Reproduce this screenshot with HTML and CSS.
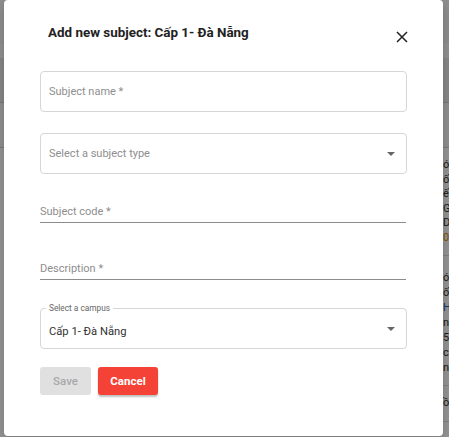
FILE: index.html
```html
<!DOCTYPE html>
<html lang="en">
<head>
  <meta charset="UTF-8">
  <title>Add new subject</title>
  <link rel="stylesheet" href="styles.css">
</head>
<body>

<!-- page behind the modal -->
<div class="page">
  <div class="page-head"></div>
  <div class="page-tabs"></div>
  <div class="page-row"></div>
  <div class="page-row"></div>
  <div class="page-table">
    <div class="cell-block">
      <p>ó</p><p>ố</p><p>ế</p><p>G</p><p>Dế</p><p class="orange">0</p>
    </div>
    <div class="cell-block second">
      <p>ó</p><p>ố</p><p class="blue">H</p><p>n.</p><p>5/</p><p>c</p><p>nc</p>
    </div>
    <div class="cell-block">
      <p>ồ</p>
    </div>
  </div>
</div>

<div class="backdrop"></div>

<div class="dialog">
  <div class="dialog-head">
    <h2 class="dialog-title">Add new subject: Cấp 1- Đà Nẵng</h2>
    <button class="close-btn" aria-label="close">
      <svg width="12" height="12" viewBox="0 0 12 12">
        <path d="M1 1 L11 11 M11 1 L1 11" stroke="#222" stroke-width="1.5" fill="none"/>
      </svg>
    </button>
  </div>

  <form class="dialog-form">
    <div class="field outlined">
      <span class="placeholder">Subject name *</span>
    </div>

    <div class="field outlined select">
      <span class="placeholder">Select a subject type</span>
      <span class="caret"></span>
    </div>

    <div class="field underlined code">
      <span class="placeholder">Subject code *</span>
    </div>

    <div class="field underlined desc">
      <span class="placeholder">Description *</span>
    </div>

    <div class="field outlined select campus">
      <span class="legend">Select a campus</span>
      <span class="value">Cấp 1- Đà Nẵng</span>
      <span class="caret"></span>
    </div>

    <div class="actions">
      <button type="button" class="btn btn-save" disabled>Save</button>
      <button type="button" class="btn btn-cancel">Cancel</button>
    </div>
  </form>
</div>

</body>
</html>
```

FILE: styles.css
```css
* {margin:0;padding:0;box-sizing:border-box;}
body {
  width: 449px;
  height: 437px;
  overflow: hidden;
  position: relative;
  font-family: Roboto, "Noto Sans", sans-serif;
  background: #fff;
}

/* page under the modal */
.page {
  display: flex;
  flex-direction: column;
  height: 100%;
}
.page-head { height: 45px; background: #f4f4f4; border-bottom: 1px solid #fff; }
.page-tabs { height: 13px; background: #fafafa; }
.page-row  { height: 45px; background: #e8e8e8; border-bottom: 1px solid #d0d0d0; }
.page-row + .page-row { background: #f6f6f6; }
.page-table {
  flex: 1;
  background: #fff;
  display: flex;
  flex-direction: column;
  padding-left: 443px;
}
.cell-block {
  padding: 10px 0 10px;
  border-bottom: 1px solid #ddd;
  font-size: 11px;
  line-height: 14.5px;
  color: #333;
  white-space: nowrap;
}
.cell-block.second { padding-top: 14px; line-height: 15px; }
.orange { color: #e68a00; }
.blue { color: #1b5fc2; }

.backdrop {
  position: absolute;
  inset: 0;
  background: rgba(0, 0, 0, 0.42);
}

/* modal */
.dialog {
  position: absolute;
  left: 4px;
  top: 0;
  width: 439px;
  height: 436px;
  background: #fff;
  border-radius: 4px;
  padding: 22px 36px 0;
  box-shadow: 0 4px 12px rgba(0,0,0,0.2);
}
.dialog-head {
  display: flex;
  justify-content: space-between;
  align-items: flex-start;
  padding-left: 8px;
}
.dialog-title {
  font-size: 13.4px;
  font-weight: 700;
  line-height: 21px;
  color: #222;
}
.close-btn {
  background: none;
  border: none;
  width: 12px;
  height: 12px;
  margin-top: 9px;
  margin-right: -1px;
  display: flex;
}

.dialog-form {
  display: flex;
  flex-direction: column;
  margin-top: 28px;
}
.field {
  position: relative;
  display: flex;
  align-items: center;
}
.placeholder {
  font-size: 11px;
  line-height: 14px;
  color: #8e8e8e;
}
.outlined {
  height: 41px;
  border: 1px solid #d6d6d6;
  border-radius: 4px;
  padding: 0 8px;
}
.outlined + .outlined { margin-top: 21px; }
.select { justify-content: space-between; }
.caret {
  width: 0;
  height: 0;
  border-left: 4px solid transparent;
  border-right: 4px solid transparent;
  border-top: 4px solid #666;
  margin-right: 3px;
}

.underlined {
  height: 30px;
  align-items: flex-end;
  padding-bottom: 3px;
  border-bottom: 1px solid #8c8c8c;
  margin-right: 1px;
}
.code { margin-top: 19px; }
.desc { margin-top: 27px; }
.campus { margin-top: 28px; align-items: flex-start; padding-top: 15px; }
.campus .caret { margin-top: 3px; }
.legend {
  position: absolute;
  top: -6px;
  left: 5px;
  padding: 0 3px;
  background: #fff;
  font-size: 8.3px;
  line-height: 10px;
  color: #666;
}
.value {
  font-size: 11.2px;
  line-height: 15px;
  color: #333;
}

.actions {
  display: flex;
  gap: 7px;
  margin-top: 18px;
}
.btn {
  height: 28px;
  border: none;
  border-radius: 3px;
  font-family: Roboto, sans-serif;
  font-size: 11.5px;
}
.btn-save {
  width: 51px;
  background: #e0e0e0;
  color: #a8a8a8;
  font-weight: 500;
}
.btn-cancel {
  width: 60px;
  background: #f44336;
  color: #fff;
  font-weight: 700;
  box-shadow: 0 2px 2px rgba(0,0,0,0.25);
}
```
